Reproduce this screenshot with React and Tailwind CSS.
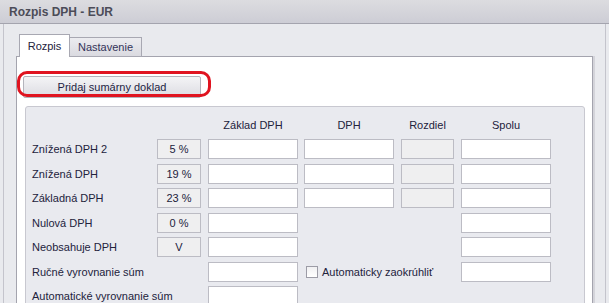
import React from "react"

const font = { fontFamily: '"Liberation Sans", Arial, sans-serif' }

function Field({ w = "w-[90px]", gray = false, children, className = "" }) {
  return (
    <div
      className={`${w} h-[20px] border border-[#bcbcc4] flex items-center justify-center text-[11px] text-[#22223c] ${
        gray ? "bg-[#efeff0]" : "bg-white"
      } ${className}`}
    >
      {children}
    </div>
  )
}

function Row({ label, rate, zaklad = true, dph = true, rozdiel = true, spolu = true, extra }) {
  return (
    <div className="flex items-center h-[20px]">
      <div className="w-[131px] pl-[6px] text-[11px] text-[#22223c] whitespace-nowrap">{label}</div>
      {rate ? <Field w="w-[44px]" gray>{rate}</Field> : <div className="w-[44px]" />}
      {zaklad ? <Field className="ml-[7px]" /> : <div className="w-[90px] ml-[7px]" />}
      {extra ? (
        extra
      ) : (
        <>
          {dph ? <Field className="ml-[6px]" /> : <div className="w-[90px] ml-[6px]" />}
          {rozdiel ? <Field w="w-[53px]" gray className="ml-[7px]" /> : <div className="w-[53px] ml-[7px]" />}
        </>
      )}
      {spolu ? <Field className="ml-[7px]" /> : null}
    </div>
  )
}

export default function App() {
  return (
    <div className="w-[609px] h-[303px] overflow-hidden bg-[#e9eaee] flex flex-col" style={font}>
      {/* title bar */}
      <div className="h-[24px] shrink-0 bg-gradient-to-b from-[#dcdce0] to-[#cdcdd5] border-b border-[#a4a4ae] flex items-center pl-[9px]">
        <span className="text-[12px] font-bold text-[#4c4c58]">Rozpis DPH - EUR</span>
      </div>

      <div className="flex-1 mx-[3px] border-x border-[#c4c4cc] pl-[12px] pr-[12px] pt-[10px] flex flex-col">
        {/* tabs */}
        <div className="flex items-end ml-[3px] relative z-10 -mb-px">
          <div className="h-[23px] w-[51px] bg-white border border-b-0 border-[#a8a8b2] flex items-center justify-center text-[11px] text-[#22223c]">
            Rozpis
          </div>
          <div className="h-[20px] w-[72px] bg-gradient-to-b from-[#ececf0] to-[#dadae0] border border-l-0 border-[#a8a8b2] flex items-center justify-center text-[11px] text-[#34345a]">
            Nastavenie
          </div>
        </div>

        {/* panel */}
        <div className="flex-1 bg-white border border-[#a4a4ae] shadow-[2px_0_0_#d4d4da] pl-[6px] pr-[7px] pt-[17px] flex flex-col">
          <div className="relative w-[178px]">
            <button className="w-[178px] h-[22px] bg-gradient-to-b from-[#f4f4f6] to-[#dcdce2] border border-[#b4b4bc] rounded-[2px] text-[11px] text-[#1e1e44]">
              Pridaj sumárny doklad
            </button>
            <div className="absolute left-[-6px] top-[-3px] w-[194px] h-[26px] border-[3px] border-[#e01420] rounded-[10px] pointer-events-none" />
          </div>

          <div className="mt-[8px] ml-[2px] flex-1 bg-[#e9eaef] border border-[#c8c8d0] rounded-[3px] flex flex-col">
            <div className="h-[32px] flex items-start pt-[10px] text-[11px] text-[#22223c]">
              <div className="w-[131px]" />
              <div className="w-[44px]" />
              <div className="w-[90px] ml-[7px] text-center">Základ DPH</div>
              <div className="w-[90px] ml-[6px] text-center">DPH</div>
              <div className="w-[53px] ml-[7px] text-center">Rozdiel</div>
              <div className="w-[90px] ml-[7px] text-center">Spolu</div>
            </div>
            <div className="flex flex-col gap-[4.5px]">
              <Row label="Znížená DPH 2" rate="5 %" />
              <Row label="Znížená DPH" rate="19 %" />
              <Row label="Základná DPH" rate="23 %" />
              <Row label="Nulová DPH" rate="0 %" dph={false} rozdiel={false} />
              <Row label="Neobsahuje DPH" rate="V" dph={false} rozdiel={false} />
              <Row
                label="Ručné vyrovnanie súm"
                extra={
                  <div className="w-[148px] ml-[8px] flex items-center gap-[4px]">
                    <div className="w-[12px] h-[12px] border border-[#9c9ca6] bg-gradient-to-b from-[#f0f0f2] to-white" />
                    <span className="text-[11px] text-[#22223c] whitespace-nowrap">Automaticky zaokrúhliť</span>
                  </div>
                }
              />
              <Row label="Automatické vyrovnanie súm" dph={false} rozdiel={false} spolu={false} />
            </div>
          </div>
        </div>
      </div>
    </div>
  )
}
